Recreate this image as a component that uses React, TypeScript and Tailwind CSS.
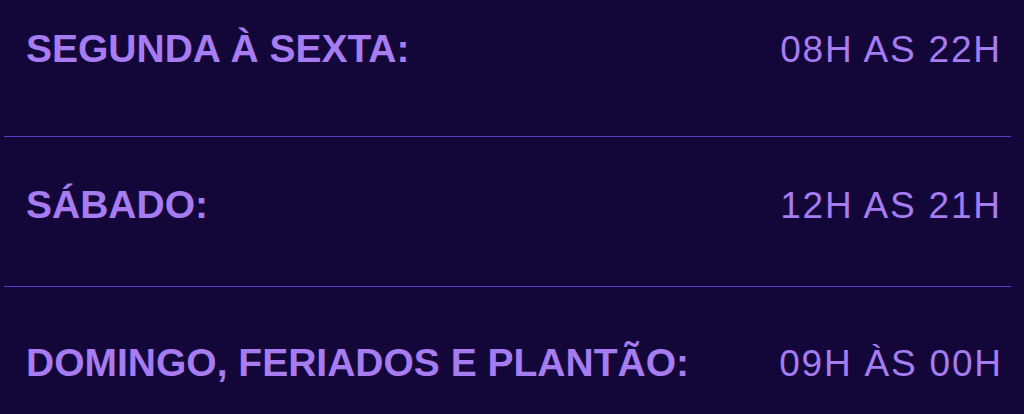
const rows = [
  { label: 'SEGUNDA À SEXTA:', hours: '08H AS 22H', pad: 'pt-[29px] pb-[67px]', border: true },
  { label: 'SÁBADO:', hours: '12H AS 21H', pad: 'pt-[48px] pb-[61px]', border: true },
  { label: 'DOMINGO, FERIADOS E PLANTÃO:', hours: '09H ÀS 00H', pad: 'pt-[56px] pb-[20px]', border: false },
]

export default function App() {
  return (
    <main
      className="w-[1024px] h-[414px] overflow-hidden bg-[#13073a] pl-[4px] pr-[13px]"
      style={{ fontFamily: '"Liberation Sans", Arial, sans-serif' }}
    >
      {rows.map(r => (
        <div
          key={r.label}
          className={`flex items-baseline justify-between pl-[22px] ${r.pad} ${r.border ? 'border-b border-[#5b3bc4]' : ''}`}
        >
          <span className="text-[39px] leading-[39px] font-bold text-[#a67cf0] whitespace-nowrap">{r.label}</span>
          <span className="w-[240px] text-center text-[37px] leading-[39px] tracking-[1.8px] text-[#a67cf0] whitespace-nowrap">
            {r.hours}
          </span>
        </div>
      ))}
    </main>
  )
}
